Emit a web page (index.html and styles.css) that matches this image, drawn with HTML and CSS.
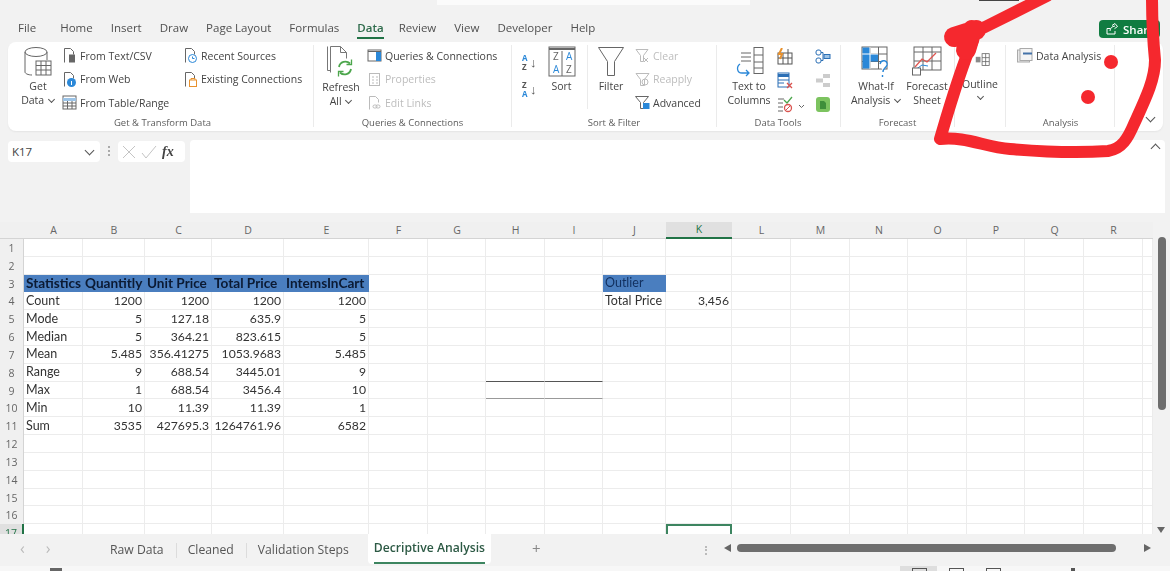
FILE: index.html
```html
<!DOCTYPE html>
<html lang="en">
    <head>
        <meta charset="UTF-8">
        <meta name="viewport" content="width=device-width, initial-scale=1.0">
        <title>Excel - Decriptive Analysis</title>
        <link rel="stylesheet" href="styles.css">
    </head>
    <body>
        <div class="app">
            <div class="titlebar">
                <div class="search"></div>
                <div class="window-btn"></div>
            </div>

            <nav class="menu">
                <span class="first">File</span>
                <span>Home</span>
                <span>Insert</span>
                <span>Draw</span>
                <span>Page Layout</span>
                <span>Formulas</span>
                <span class="active">Data</span>
                <span>Review</span>
                <span>View</span>
                <span>Developer</span>
                <span>Help</span>
                <button class="share">
                    <svg width="14" height="14" viewBox="0 0 14 14" fill="none" stroke="#fff" stroke-width="1"><path d="M2 6.500h3M2 6.500v5.500h8V9M7 3.500l3-2 2.500 3-3 2.200M5 9c0-3 2-4.500 5-5"/></svg>
                    Share
                </button>
            </nav>

            <section class="ribbon">
                <div class="group g-get">
                    <div class="group-body">
                        <div class="big w-get">
                            <svg width="32" height="32" viewBox="0 0 32 32" fill="none" stroke="#666"><ellipse cx="14" cy="6" rx="11" ry="4.500" fill="#fff"/><path d="M3 6v20c0 1.500 3 3 7 3M25 6v8"/><rect x="14" y="15" width="15" height="14" fill="#fff"/><path d="M14 19.500h15M14 24h15M19 15v14M24 15v14"/></svg>
                            <span>Get</span>
                            <span>Data <i class="chev"></i></span>
                        </div>
                        <div class="col w-from">
                            <div class="small">
                                <svg width="15" height="17" viewBox="0 0 15 17" fill="none" stroke="#666"><path d="M2.500 15.500v-14h6l3 3v3"/><rect x="7.500" y="8" width="5" height="7" fill="#666"/></svg>
                                From Text/CSV
                            </div>
                            <div class="small">
                                <svg width="15" height="17" viewBox="0 0 15 17" fill="none" stroke="#666"><path d="M2.500 15.500v-14h6l3 3v3"/><circle cx="9.500" cy="11.500" r="4.500" fill="#2b88d8" stroke="none"/><path d="M9.500 10v4" stroke="#fff"/></svg>
                                From Web
                            </div>
                            <div class="small">
                                <svg width="15" height="15" viewBox="0 0 15 15" fill="none" stroke="#666"><rect x="1" y="1" width="13" height="13"/><path d="M1 4.500h13" stroke-width="3" stroke="#9cc3e6"/><path d="M1 8h13M1 11h13M5.500 6v8M10 6v8"/></svg>
                                From Table/Range
                            </div>
                        </div>
                        <div class="col">
                            <div class="small">
                                <svg width="15" height="17" viewBox="0 0 15 17" fill="none" stroke="#666"><path d="M2.500 15.500v-14h6l3 3v3"/><circle cx="9.500" cy="11.500" r="4" fill="#fff" stroke="#2b88d8"/><path d="M9.500 9.500v2h2" stroke="#2b88d8"/></svg>
                                Recent Sources
                            </div>
                            <div class="small">
                                <svg width="15" height="17" viewBox="0 0 15 17" fill="none" stroke="#666"><path d="M2.500 15.500v-14h6l3 3v3"/><rect x="6.500" y="9" width="7" height="6.500" fill="#fff" stroke="#e8912d"/><path d="M8 9V7.500h4V9" stroke="#e8912d"/></svg>
                                Existing Connections
                            </div>
                        </div>
                    </div>
                    <div class="group-label">Get &amp; Transform Data</div>
                </div>

                <div class="group g-query">
                    <div class="group-body">
                        <div class="big w-refresh">
                            <svg width="32" height="34" viewBox="0 0 32 34" fill="none" stroke="#777"><path d="M2.500 1.500v24h3"/><path d="M5.500 27.500v-26h10l6 6v6" fill="#fff"/><path d="M15.500 1.500v6h6"/><path d="M14 22a6.500 6.500 0 0 1 11-3.500M26 24a6.500 6.500 0 0 1-11 3.500" stroke="#4ca64c" stroke-width="1.800"/><path d="M26.500 14.500v5h-5M13.500 31.500v-5h5" stroke="#4ca64c" stroke-width="1.300"/></svg>
                            <span>Refresh</span>
                            <span>All <i class="chev"></i></span>
                        </div>
                        <div class="col">
                            <div class="small">
                                <svg width="15" height="15" viewBox="0 0 15 15" fill="none" stroke="#666"><rect x="1" y="2" width="13" height="11"/><path d="M1 3.500h13"/><rect x="9" y="4" width="5" height="9" fill="#2b88d8" stroke="none"/></svg>
                                Queries &amp; Connections
                            </div>
                            <div class="small off">
                                <svg width="15" height="15" viewBox="0 0 15 15" fill="none" stroke="#bbb"><rect x="2.500" y="1.500" width="10" height="12"/><path d="M5 5h2M9 5h2M5 8h2M9 8h2M5 11h2M9 11h2"/></svg>
                                Properties
                            </div>
                            <div class="small off">
                                <svg width="15" height="16" viewBox="0 0 15 16" fill="none" stroke="#bbb"><path d="M2.500 14.500v-13h6l3 3v3"/><rect x="6" y="10" width="4" height="3" rx="1.500"/><rect x="9" y="10" width="4" height="3" rx="1.500"/></svg>
                                Edit Links
                            </div>
                        </div>
                    </div>
                    <div class="group-label">Queries &amp; Connections</div>
                </div>

                <div class="group g-sort">
                    <div class="group-body">
                        <div class="col w-az">
                            <div class="az"><span class="blue">A</span><span>Z</span><b>↓</b></div>
                            <div class="az"><span>Z</span><span class="blue">A</span><b>↓</b></div>
                        </div>
                        <div class="big w-sort">
                            <svg width="28" height="32" viewBox="0 0 28 32" fill="none" stroke="#666"><rect x="1" y="1" width="26" height="29"/><path d="M1 3h26" stroke-width="2"/><path d="M14 5v25"/><text x="5" y="14" class="sort-letter">Z</text><text x="18" y="14" class="sort-letter blue-fill">A</text><text x="5" y="27" class="sort-letter blue-fill">A</text><text x="18" y="27" class="sort-letter">Z</text></svg>
                            <span>Sort</span>
                        </div>
                        <div class="big w-filter">
                            <svg width="28" height="32" viewBox="0 0 28 32" fill="none" stroke="#666"><path d="M1.500 1.500h25l-9 14v14h-7v-14z"/></svg>
                            <span>Filter</span>
                        </div>
                        <div class="col">
                            <div class="small off">
                                <svg width="15" height="15" viewBox="0 0 15 15" fill="none" stroke="#bbb"><path d="M1 1.500h12l-4.500 6v6h-3v-6z"/><path d="M9 10l4 4M13 10l-4 4"/></svg>
                                Clear
                            </div>
                            <div class="small off">
                                <svg width="15" height="15" viewBox="0 0 15 15" fill="none" stroke="#bbb"><path d="M1 1.500h13l-4.500 6v6h-4v-6z"/><circle cx="10" cy="10" r="3"/></svg>
                                Reapply
                            </div>
                            <div class="small">
                                <svg width="15" height="15" viewBox="0 0 15 15" fill="none" stroke="#666"><path d="M.500 1.500h13l-5 6v6h-3v-6z"/><rect x="8" y="8" width="6.500" height="6" fill="#2b88d8" stroke="none"/></svg>
                                Advanced
                            </div>
                        </div>
                    </div>
                    <div class="group-label">Sort &amp; Filter</div>
                </div>

                <div class="group g-tools">
                    <div class="group-body">
                        <div class="big w-text">
                            <svg width="32" height="32" viewBox="0 0 32 32" fill="none" stroke="#666"><path d="M8 7h10M8 11h10M8 15h10"/><rect x="21" y="1.500" width="9" height="26"/><path d="M21 9h9M21 16h9M21 22h9"/><path d="M7 18c-4 3-3 9 2 9h7M13 24l3 3-3 3" stroke="#2b88d8" stroke-width="1.300"/></svg>
                            <span>Text to</span>
                            <span>Columns</span>
                        </div>
                        <div class="col w-tool">
                            <div class="tool"><svg width="16" height="17" viewBox="0 0 16 17" fill="none" stroke="#555"><rect x="1" y="5" width="14" height="11"/><path d="M1 10h14M6 5v11M11 1v15"/><path d="M5 0L2 6h3l-2 5" stroke="#e8912d" stroke-width="2"/></svg></div>
                            <div class="tool"><svg width="16" height="17" viewBox="0 0 16 17" fill="none" stroke="#2b6fb5"><rect x="1" y="1" width="11" height="14"/><path d="M1 3.500h11" stroke-width="3"/><path d="M1 8h11M1 11h6"/><path d="M10 11l5 5M15 11l-5 5" stroke="#d9534f" stroke-width="1.300"/></svg></div>
                            <div class="tool"><svg width="29" height="17" viewBox="0 0 29 17" fill="none" stroke="#666"><path d="M1 3h6M1 7h5M1 11h5M1 15h5"/><path d="M7 4l3 3 5-6" stroke="#4ca64c" stroke-width="1.300"/><circle cx="11" cy="12" r="3.500" stroke="#d9534f" stroke-width="1.300"/><path d="M8.500 14.500l5-5" stroke="#d9534f"/><path d="M22 9l2.500 2.500L27 9" stroke-width="1"/></svg></div>
                        </div>
                        <div class="col">
                            <div class="tool"><svg width="16" height="15" viewBox="0 0 16 15" fill="none" stroke="#2b6fb5"><rect x="1" y="1" width="5" height="5" rx="2"/><rect x="1" y="9" width="5" height="5" rx="2"/><rect x="9" y="5.500" width="6" height="4" fill="#9cc3e6"/><path d="M6 3.500h2v8H6"/></svg></div>
                            <div class="tool"><svg width="16" height="15" viewBox="0 0 16 15" fill="#ccc"><rect x="8" y="1" width="7" height="4"/><rect x="1" y="5.500" width="7" height="4"/><rect x="8" y="10" width="7" height="4"/></svg></div>
                            <div class="tool"><svg width="16" height="17" viewBox="0 0 16 17"><rect x="1" y="1" width="14" height="15" rx="3" fill="#7cc35f"/><path d="M5 5h4l2 2v6H5z" fill="#3f8f3a"/></svg></div>
                        </div>
                    </div>
                    <div class="group-label">Data Tools</div>
                </div>

                <div class="group g-forecast">
                    <div class="group-body">
                        <div class="big w-what">
                            <svg width="30" height="32" viewBox="0 0 30 32" fill="none" stroke="#666"><rect x="1" y="1" width="25" height="22"/><path d="M1 8h25M1 15.500h25M9 1v22M17.500 1v22"/><path d="M1.500 1.500h7.500v6.500h8v7.500h-8v7h-7.500z" fill="#2b88d8" stroke="none"/><path d="M1 8h16M9 1v22" stroke="#fff"/><path d="M19 18c1-5 8-4 7 1-1 3-4 3-4 7M21.500 29v2" stroke="#2b88d8" stroke-width="1.400" fill="#fff"/></svg>
                            <span>What-If</span>
                            <span>Analysis <i class="chev"></i></span>
                        </div>
                        <div class="big w-sheet">
                            <svg width="30" height="32" viewBox="0 0 30 32" fill="none" stroke="#666"><rect x="2" y="1" width="27" height="23"/><path d="M2 6h27M2 15h27M11 1v23M20 1v23"/><path d="M3 21l7-8 5 3 9-9" stroke="#e0544f" stroke-width="1.300"/><path d="M3 24l7-5 6 1" stroke="#2b88d8"/><rect x=".500" y="22" width="8" height="7" fill="#fff"/></svg>
                            <span>Forecast</span>
                            <span>Sheet</span>
                        </div>
                    </div>
                    <div class="group-label">Forecast</div>
                </div>

                <div class="group g-outline">
                    <div class="group-body">
                        <div class="big w-outline">
                            <svg width="19" height="16" viewBox="0 0 24 20" fill="none" stroke="#666"><rect x="14" y="2" width="9" height="15"/><path d="M14 7h9M14 12h9M18.500 2v15"/><rect x="6" y="6" width="6" height="7" fill="#8a8a8a" stroke="none"/></svg>
                            <span>Outline</span>
                            <i class="chev"></i>
                        </div>
                    </div>
                    <div class="group-label"></div>
                </div>

                <div class="group g-analysis">
                    <div class="group-body">
                        <div class="col">
                            <div class="small">
                                <svg width="16" height="15" viewBox="0 0 16 15" fill="none" stroke="#aaa"><rect x=".5" y="2" width="12" height="12" fill="#e8e8e8"/><rect x="3" y=".5" width="12" height="12" fill="#f4f4f4"/><path d="M6 5.500h9" stroke="#4472a8" stroke-width="2"/></svg>
                                Data Analysis
                            </div>
                        </div>
                    </div>
                    <div class="group-label">Analysis</div>
                </div>

                <div class="collapse"><i class="chev large"></i></div>
            </section>

            <div class="formula-row">
                <div class="namebox">K17 <i class="chev large"></i></div>
                <div class="dots"></div>
                <div class="fxbox">
                    <svg width="16" height="16" viewBox="0 0 16 16" fill="none" stroke="#c4c4c4"><path d="M2 2l12 12M14 2L2 14"/></svg>
                    <svg width="16" height="16" viewBox="0 0 16 16" fill="none" stroke="#c4c4c4"><path d="M1 9l4 5 10-12"/></svg>
                    <em>fx</em>
                </div>
                <div class="formula-input"><i class="chev large up"></i></div>
            </div>

            <main class="sheet">
                <div class="grid-wrap">
                    <table class="grid">
                        <colgroup>
                            <col class="c24"><col class="c59"><col class="c62"><col class="c67"><col class="c72"><col class="c85"><col class="c59"><col class="c58"><col class="c59"><col class="c58"><col class="c63"><col class="c66"><col class="c59"><col class="c59"><col class="c58"><col class="c59"><col class="c58"><col class="c59"><col class="c59"><col class="c10">
                        </colgroup>
                        <thead>
                            <tr><th class="corner"></th><th>A</th><th>B</th><th>C</th><th>D</th><th>E</th><th>F</th><th>G</th><th>H</th><th>I</th><th>J</th><th class="picked">K</th><th>L</th><th>M</th><th>N</th><th>O</th><th>P</th><th>Q</th><th>R</th><th></th></tr>
                        </thead>
                        <tbody>
                            <tr><th>1</th><td></td><td></td><td></td><td></td><td></td><td></td><td></td><td></td><td></td><td></td><td></td><td></td><td></td><td></td><td></td><td></td><td></td><td></td><td></td></tr>
                            <tr><th>2</th><td></td><td></td><td></td><td></td><td></td><td></td><td></td><td></td><td></td><td></td><td></td><td></td><td></td><td></td><td></td><td></td><td></td><td></td><td></td></tr>
                            <tr><th>3</th><td class="hd">Statistics</td><td class="hd">Quantitly</td><td class="hd">Unit Price</td><td class="hd">Total Price</td><td class="hd">IntemsInCart</td><td></td><td></td><td></td><td></td><td class="hd thin">Outlier</td><td></td><td></td><td></td><td></td><td></td><td></td><td></td><td></td><td></td></tr>
                            <tr><th>4</th><td>Count</td><td class="n">1200</td><td class="n">1200</td><td class="n">1200</td><td class="n">1200</td><td></td><td></td><td></td><td></td><td>Total Price</td><td class="n">3,456</td><td></td><td></td><td></td><td></td><td></td><td></td><td></td><td></td></tr>
                            <tr><th>5</th><td>Mode</td><td class="n">5</td><td class="n">127.18</td><td class="n">635.9</td><td class="n">5</td><td></td><td></td><td></td><td></td><td></td><td></td><td></td><td></td><td></td><td></td><td></td><td></td><td></td><td></td></tr>
                            <tr><th>6</th><td>Median</td><td class="n">5</td><td class="n">364.21</td><td class="n">823.615</td><td class="n">5</td><td></td><td></td><td></td><td></td><td></td><td></td><td></td><td></td><td></td><td></td><td></td><td></td><td></td><td></td></tr>
                            <tr><th>7</th><td>Mean</td><td class="n">5.485</td><td class="n">356.41275</td><td class="n">1053.9683</td><td class="n">5.485</td><td></td><td></td><td></td><td></td><td></td><td></td><td></td><td></td><td></td><td></td><td></td><td></td><td></td><td></td></tr>
                            <tr><th>8</th><td>Range</td><td class="n">9</td><td class="n">688.54</td><td class="n">3445.01</td><td class="n">9</td><td></td><td></td><td class="line-dark"></td><td class="line-dark"></td><td></td><td></td><td></td><td></td><td></td><td></td><td></td><td></td><td></td><td></td></tr>
                            <tr><th>9</th><td>Max</td><td class="n">1</td><td class="n">688.54</td><td class="n">3456.4</td><td class="n">10</td><td></td><td></td><td class="line-gray"></td><td class="line-gray"></td><td></td><td></td><td></td><td></td><td></td><td></td><td></td><td></td><td></td><td></td></tr>
                            <tr><th>10</th><td>Min</td><td class="n">10</td><td class="n">11.39</td><td class="n">11.39</td><td class="n">1</td><td></td><td></td><td></td><td></td><td></td><td></td><td></td><td></td><td></td><td></td><td></td><td></td><td></td><td></td></tr>
                            <tr><th>11</th><td>Sum</td><td class="n">3535</td><td class="n">427695.3</td><td class="n">1264761.96</td><td class="n">6582</td><td></td><td></td><td></td><td></td><td></td><td></td><td></td><td></td><td></td><td></td><td></td><td></td><td></td><td></td></tr>
                            <tr><th>12</th><td></td><td></td><td></td><td></td><td></td><td></td><td></td><td></td><td></td><td></td><td></td><td></td><td></td><td></td><td></td><td></td><td></td><td></td><td></td></tr>
                            <tr><th>13</th><td></td><td></td><td></td><td></td><td></td><td></td><td></td><td></td><td></td><td></td><td></td><td></td><td></td><td></td><td></td><td></td><td></td><td></td><td></td></tr>
                            <tr><th>14</th><td></td><td></td><td></td><td></td><td></td><td></td><td></td><td></td><td></td><td></td><td></td><td></td><td></td><td></td><td></td><td></td><td></td><td></td><td></td></tr>
                            <tr><th>15</th><td></td><td></td><td></td><td></td><td></td><td></td><td></td><td></td><td></td><td></td><td></td><td></td><td></td><td></td><td></td><td></td><td></td><td></td><td></td></tr>
                            <tr><th>16</th><td></td><td></td><td></td><td></td><td></td><td></td><td></td><td></td><td></td><td></td><td></td><td></td><td></td><td></td><td></td><td></td><td></td><td></td><td></td></tr>
                            <tr><th class="picked-row">17</th><td></td><td></td><td></td><td></td><td></td><td></td><td></td><td></td><td></td><td></td><td class="current"></td><td></td><td></td><td></td><td></td><td></td><td></td><td></td><td></td></tr>
                        </tbody>
                    </table>
                </div>
                <div class="vscroll">
                    <i class="tri tri-down"></i>
                    <div class="vthumb"></div>
                </div>
            </main>

            <footer class="tabbar">
                <div class="tab-nav"><span>‹</span><span>›</span></div>
                <div class="tab">Raw Data</div>
                <div class="tab">Cleaned</div>
                <div class="tab">Validation Steps</div>
                <div class="tab current-tab"><span>Decriptive Analysis</span></div>
                <div class="tab-add">+</div>
                <div class="tab-dots"></div>
                <div class="hscroll">
                    <i class="tri tri-left"></i>
                    <div class="hthumb"></div>
                    <i class="tri tri-right"></i>
                </div>
            </footer>

            <div class="statusbar">
                <i class="status-box"></i>
                <div class="views">
                    <i class="view on"></i><i class="view"></i><i class="view"></i>
                </div>
                <i class="zoom-tick"></i>
            </div>
        </div>

        <svg class="scribble" width="1170" height="571" viewBox="0 0 1170 571" fill="none" stroke="#f5282e" stroke-linecap="round" stroke-linejoin="round">
            <path stroke-width="12" d="M1047 -4L985 27L958 38M973 40C960 70 950 105 940 139C965 136 985 147 1010 149C1045 152 1080 153 1108 151C1122 149 1128 138 1134 124C1145 100 1155 80 1155 60C1153 40 1152 20 1152 -4"/>
            <path stroke-width="20" d="M954 37L976 30M972 30L966 50"/>
            <circle cx="1111" cy="62" r="7" fill="#f5282e" stroke="none"/>
            <circle cx="1088" cy="97" r="7" fill="#f5282e" stroke="none"/>
        </svg>
    </body>
</html>
```

FILE: styles.css
```css
* {
    box-sizing: border-box;
}
html, body {
    margin: 0;
    height: 571px;
    overflow: hidden;
}
body {
    font-family: "Open Sans", "Noto Sans", sans-serif;
    color: #444;
    background-color: #f2f2f2;
    position: relative;
}
svg {
    display: block;
    flex: none;
}
i {
    font-style: normal;
}
/* the capture is a soft phone photo of a screen */
.app {
    filter: blur(.4px);
}

/* top strip */
.titlebar {
    height: 17px;
    display: flex;
    align-items: flex-start;
}
.search {
    width: 313px;
    height: 5px;
    margin-left: 437px;
    background-color: #fbfbfb;
}
.window-btn {
    width: 40px;
    height: 1px;
    margin-left: 229px;
    background-color: #444;
}

/* menu tabs */
.menu {
    height: 25px;
    display: flex;
    align-items: flex-start;
    gap: 18px;
    padding-left: 18px;
    padding-right: 10px;
    font-size: 11.5px;
    line-height: 22px;
    color: #505050;
}
.menu .first {
    margin-right: 6px;
}
.menu .active {
    font-weight: 600;
    color: #2e6b4b;
    height: 22px;
    margin-right: -3px;
    border-bottom: 2px solid #217346;
}
.share {
    margin-left: auto;
    width: 61px;
    height: 18px;
    margin-top: 3px;
    border: 0;
    border-radius: 4px;
    background-color: #107c41;
    color: #fff;
    font: 600 11.5px "Open Sans", sans-serif;
    display: flex;
    align-items: center;
    gap: 4px;
    padding: 0 6px;
    white-space: nowrap;
    overflow: hidden;
}

/* ribbon */
.ribbon {
    height: 89px;
    margin: 0 7px 0 8px;
    background-color: #fff;
    border-radius: 8px;
    display: flex;
    font-size: 10.5px;
    position: relative;
    box-shadow: 0 1px 2px rgba(0, 0, 0, .06);
}
.group {
    display: flex;
    flex-direction: column;
    flex: none;
    border-right: 1px solid #ebebeb;
    margin: 3px 0 4px;
}
.g-get { width: 306px; padding-left: 14px; }
.g-query { width: 198px; padding-left: 10px; }
.g-sort { width: 205px; padding-left: 10px; }
.g-tools { width: 124px; padding-left: 9px; }
.g-forecast { width: 114px; padding-left: 10px; }
.g-outline { width: 51px; }
.g-analysis { width: 109px; padding-left: 11px; }
.group-body {
    flex: 1;
    min-height: 0;
    display: flex;
    align-items: flex-start;
    white-space: nowrap;
}
.group-label {
    height: 10px;
    margin-left: -10px;
    text-align: center;
    font-size: 9.5px;
    line-height: 12px;
    color: #5c5c5c;
}
.big {
    display: flex;
    flex-direction: column;
    align-items: center;
    line-height: 14px;
    padding-top: 1px;
}
.big svg {
    margin-bottom: 1px;
}
.w-get { width: 32px; margin-right: 8px; }
.w-from { width: 121px; }
.w-refresh { width: 34px; margin-right: 9px; padding-top: 0; }
.w-az { width: 26px; padding-top: 9px; }
.w-sort { width: 40px; padding-right: 12px; margin-right: 9px; border-right: 1px solid #ebebeb; height: 64px; }
.w-filter { width: 28px; margin-right: 10px; }
.w-text { width: 46px; margin-right: 5px; }
.w-tool { width: 38px; }
.w-what { width: 50px; margin-right: 4px; }
.w-sheet { width: 44px; }
.w-outline { width: 50px; padding-top: 7px; }
.w-outline svg { margin-bottom: 9px; }
.w-outline .chev { margin-top: 3px; }
.col {
    display: flex;
    flex-direction: column;
    margin-top: -1px;
}
.small {
    height: 23.5px;
    display: flex;
    align-items: center;
    gap: 3px;
}
.off {
    color: #bdbdbd;
}
.tool {
    height: 24px;
    display: flex;
    align-items: center;
}
.az {
    height: 27px;
    width: 16px;
    display: grid;
    grid-template-columns: 8px 8px;
    grid-template-rows: 9px 9px;
    font-size: 8px;
    line-height: 9px;
    font-weight: 700;
    color: #555;
}
.az span {
    grid-column: 1;
}
.az .blue {
    color: #2b88d8;
}
.az b {
    grid-column: 2;
    grid-row: 1 / 3;
    font-size: 13px;
    font-weight: 400;
    line-height: 18px;
}
.sort-letter {
    font-size: 10px;
    stroke: none;
    fill: #666;
}
.blue-fill {
    fill: #2b88d8;
}
.chev {
    display: inline-block;
    width: 5px;
    height: 5px;
    border-right: 1px solid #555;
    border-bottom: 1px solid #555;
    transform: rotate(45deg);
    margin: 0 1px 2px 2px;
}
.chev.large {
    width: 7px;
    height: 7px;
}
.chev.up {
    transform: rotate(225deg);
}
.collapse {
    position: absolute;
    right: 8px;
    bottom: 5px;
}

/* formula bar */
.formula-row {
    height: 73px;
    margin: 9px 5px 9px 8px;
    display: flex;
    align-items: flex-start;
    font-size: 11.5px;
}
.namebox {
    width: 92px;
    height: 21px;
    margin-top: 1px;
    background-color: #fff;
    border-radius: 4px;
    padding: 0 6px 0 4px;
    display: flex;
    align-items: center;
    justify-content: space-between;
    color: #444;
}
.dots {
    width: 2px;
    height: 10px;
    margin: 6px 8px 0 8px;
    border-left: 2px dotted #aaa;
}
.fxbox {
    width: 67px;
    height: 21px;
    margin: 1px 5px 0 0;
    background-color: #fff;
    border-radius: 4px;
    display: flex;
    align-items: center;
    gap: 4px;
    padding-left: 3px;
}
.fxbox em {
    font: italic 700 14px "Liberation Serif", serif;
    color: #444;
    margin-left: 1px;
}
.formula-input {
    flex: 1;
    height: 73px;
    background-color: #fff;
    border-radius: 4px 4px 0 0;
    display: flex;
    justify-content: flex-end;
    padding: 5px 5px 0 0;
}

/* sheet */
.sheet {
    height: 312px;
    display: flex;
    background-color: #fff;
}
.grid-wrap {
    width: 1153px;
    overflow: hidden;
}
.grid {
    width: 1153px;
    table-layout: fixed;
    border-collapse: separate;
    border-spacing: 0;
    font-family: Lato, "Open Sans", sans-serif;
    font-size: 12.5px;
    color: #333;
}
.c24 { width: 24px; }
.c59 { width: 59px; }
.c58 { width: 58px; }
.c62 { width: 62px; }
.c63 { width: 63px; }
.c66 { width: 66px; }
.c67 { width: 67px; }
.c72 { width: 72px; }
.c85 { width: 85px; }
.c10 { width: 10px; }
.grid tr {
    height: 17.83px;
}
.grid thead tr {
    height: 16px;
}
.grid thead th {
    height: 16px;
    background-color: #f0f0f0;
    border-bottom: 1px solid #d4d4d4;
    font-family: "Open Sans", sans-serif;
    font-size: 10.5px;
    font-weight: 400;
    color: #666;
    padding: 0;
    line-height: 15px;
}
.grid thead th.picked {
    background-color: #e0e0e0;
    border-bottom: 2px solid #217346;
    color: #217346;
}
.grid tbody th {
    background-color: #f0f0f0;
    border-right: 1px solid #d4d4d4;
    font-family: "Open Sans", sans-serif;
    font-size: 10.5px;
    font-weight: 400;
    color: #666;
    padding: 0;
    text-align: center;
    overflow: hidden;
}
.grid tbody th.picked-row {
    background-color: #e0e0e0;
    border-right: 2px solid #217346;
    color: #217346;
}
.grid td {
    padding: 0 2px;
    border-right: 1px solid #ececec;
    border-bottom: 1px solid #ececec;
    line-height: 14px;
    white-space: nowrap;
    overflow: hidden;
}
.grid td.n {
    font-size: 12.2px;
    text-align: right;
}
.grid td.hd {
    background-color: #4a7ebf;
    border-color: #4a7ebf;
    font-size: 13.600px;
    font-weight: 700;
    color: #0b1a33;
}
.grid td.thin {
    font-size: 12.5px;
    font-weight: 400;
    color: #12305f;
}
.grid td.line-dark {
    border-bottom: 1px solid #555;
}
.grid td.line-gray {
    border-bottom: 1px solid #999;
}
.grid td.current {
    border: 2px solid #3d8560;
    border-bottom: 0;
}
.vscroll {
    flex: 1;
    background-color: #f2f2f2;
    position: relative;
}
.vthumb {
    position: absolute;
    left: 5px;
    top: 15px;
    width: 8px;
    height: 173px;
    border-radius: 4px;
    background-color: #6e6e6e;
}
.tri {
    position: absolute;
    width: 0;
    height: 0;
    border: 4.500px solid transparent;
}
.tri-down {
    left: 4px;
    bottom: 1px;
    border-top: 6px solid #666;
    border-bottom: 0;
}

/* sheet tabs */
.tabbar {
    height: 32px;
    display: flex;
    align-items: flex-start;
    font-size: 12.2px;
    color: #555;
    position: relative;
}
.tab-nav {
    width: 98px;
    padding-left: 20px;
    display: flex;
    gap: 21px;
    color: #bbb;
    font-size: 16px;
    line-height: 28px;
}
.tab {
    height: 30px;
    padding: 0 12px;
    line-height: 32px;
    position: relative;
}
.tab + .tab::before {
    content: "";
    position: absolute;
    left: 0;
    top: 9px;
    height: 15px;
    border-left: 1px solid #dcdcdc;
}
.current-tab {
    background-color: #fff;
    padding: 0 6px;
    margin-left: 7px;
    font-weight: 600;
    color: #2d5a45;
    line-height: 28px;
    border-radius: 0 0 4px 4px;
}
.current-tab::before {
    display: none;
}
.current-tab span {
    display: block;
    height: 30px;
    border-bottom: 2px solid #3d8560;
}
.tab-add {
    margin-left: 41px;
    font-size: 15px;
    line-height: 28px;
    color: #888;
}
.tab-dots {
    position: absolute;
    left: 705px;
    top: 12px;
    height: 9px;
    border-left: 2px dotted #bbb;
}
.hscroll {
    position: absolute;
    left: 724px;
    top: 10px;
    width: 430px;
    height: 9px;
}
.hthumb {
    position: absolute;
    left: 13px;
    width: 379px;
    height: 8px;
    border-radius: 4px;
    background-color: #6e6e6e;
}
.tri-left {
    left: 0;
    top: 0;
    border-right: 7px solid #666;
    border-left: 0;
}
.tri-right {
    right: 3px;
    top: 0;
    border-left: 7px solid #666;
    border-right: 0;
}

/* status bar */
.statusbar {
    height: 5px;
    background-color: #f7f7f7;
    position: relative;
    overflow: hidden;
}
.status-box {
    position: absolute;
    left: 50px;
    top: 2px;
    width: 12px;
    height: 6px;
    background-color: #666;
}
.views {
    position: absolute;
    left: 900px;
    top: 0;
    display: flex;
}
.view {
    width: 37px;
    height: 5px;
    position: relative;
}
.view::after {
    content: "";
    position: absolute;
    left: 12px;
    top: 2px;
    width: 13px;
    height: 6px;
    border: 1px solid #555;
}
.view.on {
    background-color: #dedede;
}
.zoom-tick {
    position: absolute;
    left: 1071px;
    top: 2px;
    width: 4px;
    height: 3px;
    background-color: #555;
}

/* marker drawn over the screenshot */
.scribble {
    position: absolute;
    left: 0;
    top: 0;
    pointer-events: none;
}
```
